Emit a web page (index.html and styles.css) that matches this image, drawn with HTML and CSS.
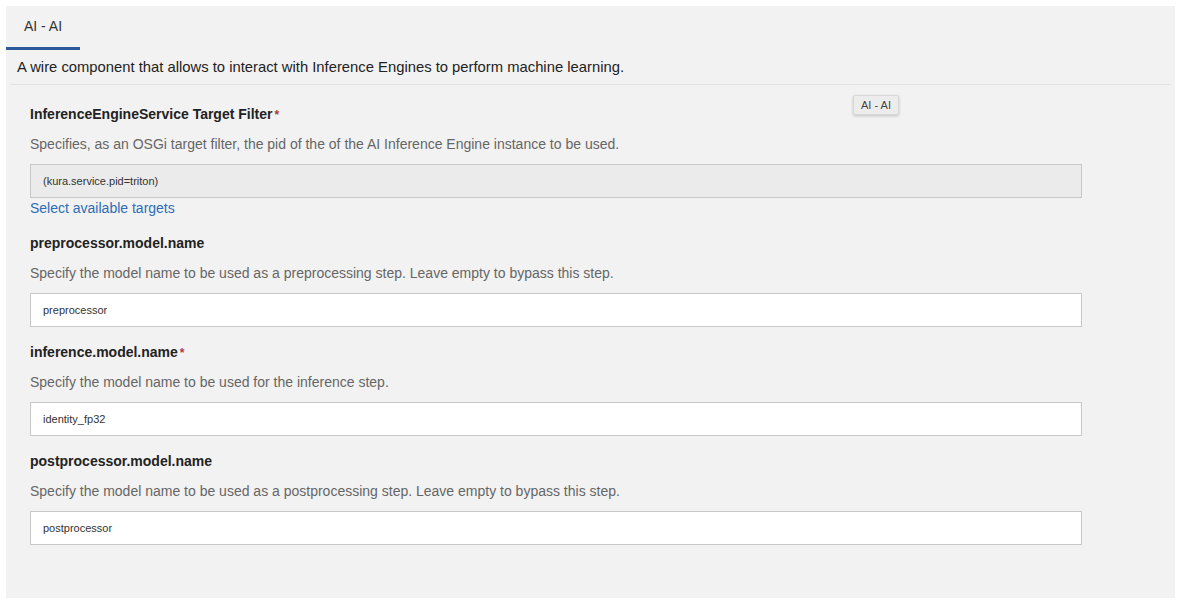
FILE: index.html
```html
<!DOCTYPE html>
<html>
<head>
<meta charset="utf-8">
<link rel="stylesheet" href="styles.css">
</head>
<body>
<div class="panel">
  <div class="tabs">
    <div class="tab active">AI - AI</div>
  </div>
  <div class="intro">A wire component that allows to interact with Inference Engines to perform machine learning.</div>
  <div class="form">
    <div class="field">
      <div class="label">InferenceEngineService Target Filter<span class="req">*</span></div>
      <div class="desc">Specifies, as an OSGi target filter, the pid of the of the AI Inference Engine instance to be used.</div>
      <div class="input readonly">(kura.service.pid=triton)</div>
      <a class="link">Select available targets</a>
    </div>
    <div class="field">
      <div class="label">preprocessor.model.name</div>
      <div class="desc">Specify the model name to be used as a preprocessing step. Leave empty to bypass this step.</div>
      <div class="input">preprocessor</div>
    </div>
    <div class="field">
      <div class="label">inference.model.name<span class="req">*</span></div>
      <div class="desc">Specify the model name to be used for the inference step.</div>
      <div class="input">identity_fp32</div>
    </div>
    <div class="field">
      <div class="label">postprocessor.model.name</div>
      <div class="desc">Specify the model name to be used as a postprocessing step. Leave empty to bypass this step.</div>
      <div class="input">postprocessor</div>
    </div>
  </div>
  <div class="tooltip">AI - AI</div>
</div>
</body>
</html>
```

FILE: styles.css
```css
html, body {
  margin: 0;
  padding: 0;
  background: #ffffff;
}
body {
  padding: 6px 5px 8px 6px;
  font-family: "Liberation Sans", Arial, Helvetica, sans-serif;
  color: #333;
}
.panel {
  position: relative;
  background: #f2f2f2;
  height: 592px;
  box-sizing: border-box;
}
.tabs {
  display: flex;
  height: 44px;
}
.tab {
  width: 74px;
  box-sizing: border-box;
  padding-top: 11px;
  text-align: center;
  font-size: 14px;
  line-height: 18px;
  color: #333;
}
.tab.active {
  border-bottom: 3px solid #2c5a9c;
}
.intro {
  padding: 7px 11px 0 7px;
  font-size: 14.8px;
  line-height: 20px;
  color: #222;
  height: 27px;
  margin: 0 4px;
  border-bottom: 1px solid #e2e2e2;
}
.form {
  padding: 19px 0 0 24px;
  width: 1052px;
}
.field {
  margin-bottom: 15px;
}
.label {
  font-size: 14px;
  font-weight: bold;
  line-height: 20px;
  height: 20px;
  color: #222;
  margin-bottom: 10px;
}
.req {
  color: #b03a3a;
  margin-left: 2px;
  font-size: 12px;
  line-height: 1;
}
.desc {
  font-size: 14px;
  line-height: 20px;
  color: #666;
  margin-bottom: 10px;
}
.input {
  height: 34px;
  box-sizing: border-box;
  border: 1px solid #c8c8c8;
  background: #fff;
  padding: 0 12px;
  font-size: 11px;
  line-height: 32px;
  color: #333;
}
.input.readonly {
  background: #ebebeb;
}
.link {
  display: block;
  font-size: 14px;
  line-height: 20px;
  color: #2d6db5;
}
.tooltip {
  position: absolute;
  left: 847px;
  top: 89px;
  width: 46px;
  height: 20px;
  box-sizing: border-box;
  background: #ececec;
  border: 1px solid #d8d8d8;
  border-radius: 2px;
  box-shadow: 0 1px 3px rgba(0,0,0,0.2);
  font-size: 11px;
  line-height: 18px;
  text-align: center;
  color: #444;
}
```
